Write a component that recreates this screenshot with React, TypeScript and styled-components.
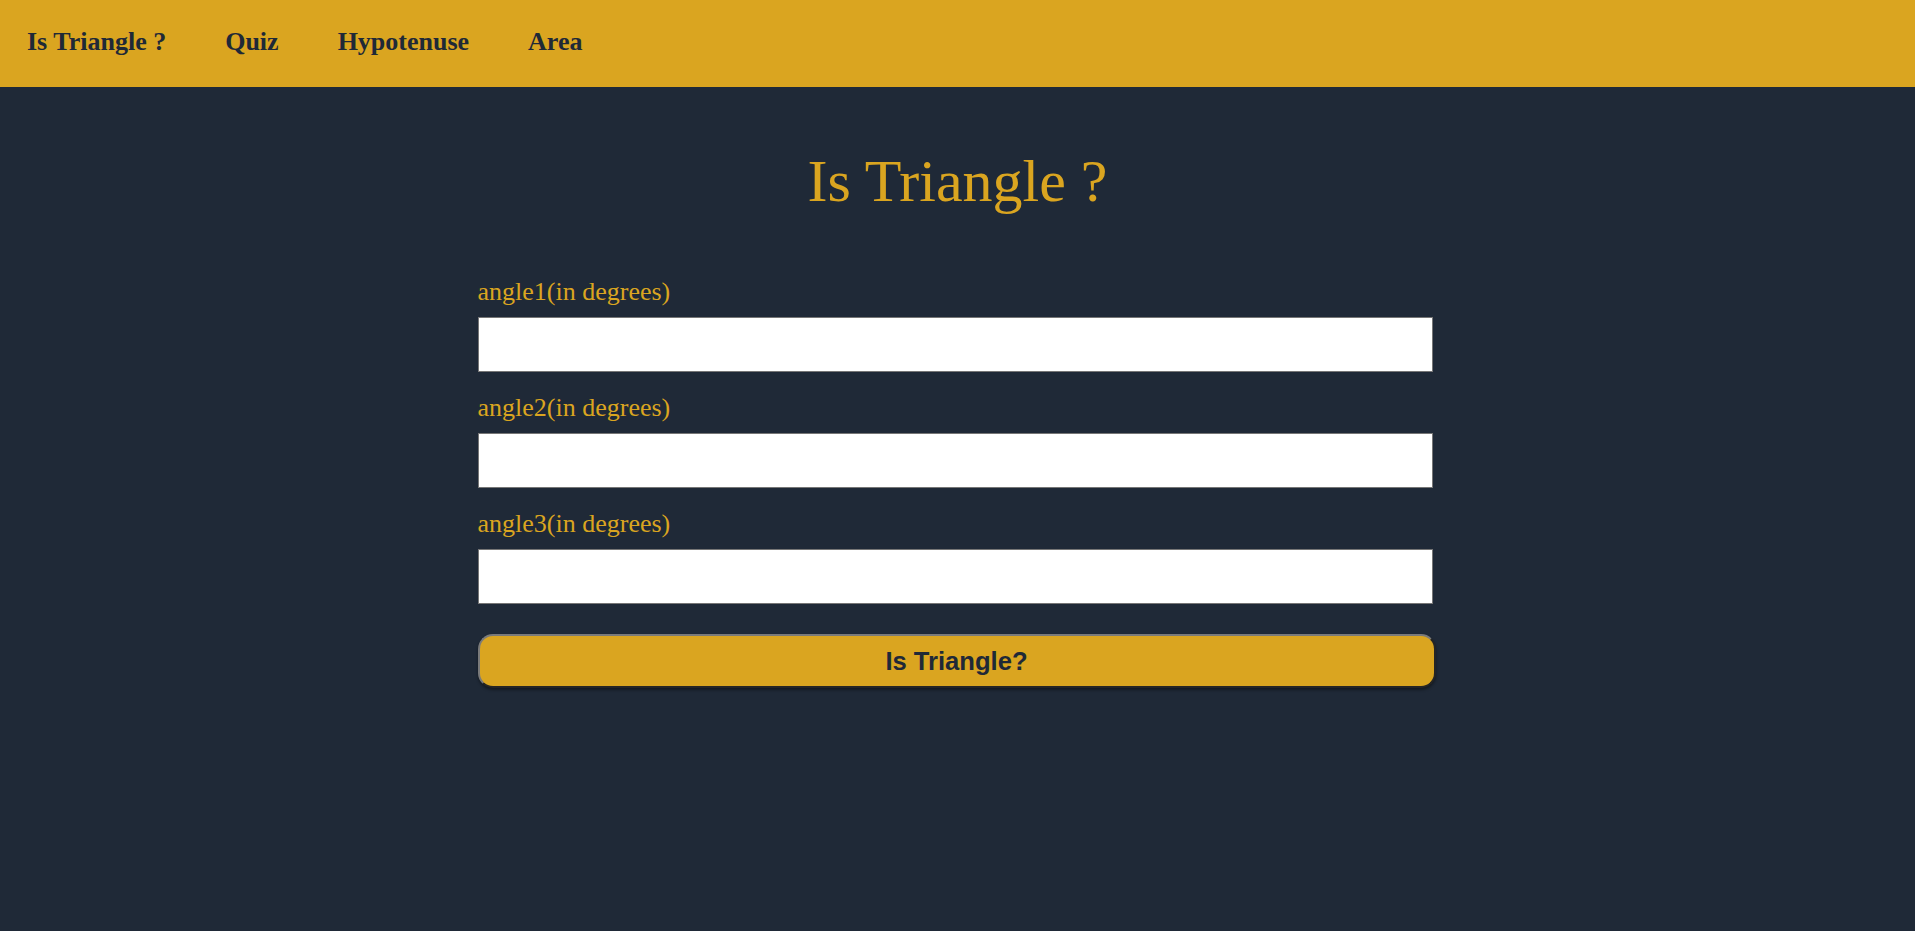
import React, { useState } from 'react'
import styled, { createGlobalStyle } from 'styled-components'

const GlobalStyle = createGlobalStyle`
	html, body {
		margin: 0;
		padding: 0;
		background-color: #1f2937;
	}

	body {
		min-height: 100vh;
		font-family: 'Liberation Serif', 'Times New Roman', serif;
	}
`

const links = ['Is Triangle ?', 'Quiz', 'Hypotenuse', 'Area']
const fields = ['angle1(in degrees)', 'angle2(in degrees)', 'angle3(in degrees)']

const App = () => {
	const [angles, setAngles] = useState<string[]>(['', '', ''])

	const handleChange = (index: number, value: string) => {
		const updated = angles.map((item, i) => (i === index ? value : item))
		setAngles(updated)
	}

	return (
		<Root>
			<GlobalStyle />
			<Nav>
				{links.map(link => (
					<NavLink key={link} href="#">
						{link}
					</NavLink>
				))}
			</Nav>
			<Main>
				<Title>Is Triangle ?</Title>
				<Form onSubmit={e => e.preventDefault()}>
					{fields.map((field, index) => (
						<Field key={field}>
							<Label htmlFor={`angle${index + 1}`}>{field}</Label>
							<Input
								id={`angle${index + 1}`}
								type="number"
								value={angles[index]}
								onChange={e => handleChange(index, e.target.value)}
							/>
						</Field>
					))}
					<SubmitBtn type="submit">Is Triangle?</SubmitBtn>
				</Form>
			</Main>
		</Root>
	)
}

export default App

const Root = styled.div`
	min-height: 100vh;
	background-color: #1f2937;
`

const Nav = styled.nav`
	display: flex;
	align-items: flex-start;
	gap: 59px;
	height: 87px;
	box-sizing: border-box;
	padding: 27px 0 0 27px;
	background-color: #daa520;
`

const NavLink = styled.a`
	font-family: 'Liberation Serif', 'Times New Roman', serif;
	font-size: 26px;
	font-weight: 700;
	line-height: 29px;
	color: #1f2937;
	text-decoration: none;
`

const Main = styled.main`
	display: flex;
	flex-direction: column;
	align-items: center;
	padding-top: 62px;
`

const Title = styled.h1`
	margin: 0;
	font-size: 60px;
	font-weight: 400;
	line-height: 64px;
	color: #daa520;
`

const Form = styled.form`
	width: 955px;
	margin: 64px 5px 0 0;
	display: flex;
	flex-direction: column;
`

const Field = styled.div`
	display: flex;
	flex-direction: column;
	margin-bottom: 21px;

	&:last-of-type {
		margin-bottom: 30px;
	}
`

const Label = styled.label`
	font-size: 26px;
	line-height: 29px;
	color: #daa520;
	margin-bottom: 11px;
`

const Input = styled.input`
	height: 55px;
	width: 100%;
	box-sizing: border-box;
	border: 1px solid #767676;
	background-color: #ffffff;
	font-size: 20px;
	padding: 0 10px;
	outline: none;
	appearance: textfield;

	&::-webkit-outer-spin-button,
	&::-webkit-inner-spin-button {
		-webkit-appearance: none;
		margin: 0;
	}
`

const SubmitBtn = styled.button`
	width: calc(100% + 3px);
	height: 54px;
	box-sizing: border-box;
	border: 2px outset #7a7a7a;
	border-radius: 15px;
	background-color: #daa520;
	color: #1f2937;
	font-family: 'Liberation Sans', Arial, sans-serif;
	font-size: 25.6px;
	font-weight: 700;
	box-shadow: 0 2px 3px rgba(0, 0, 0, 0.4);
	cursor: pointer;
`
